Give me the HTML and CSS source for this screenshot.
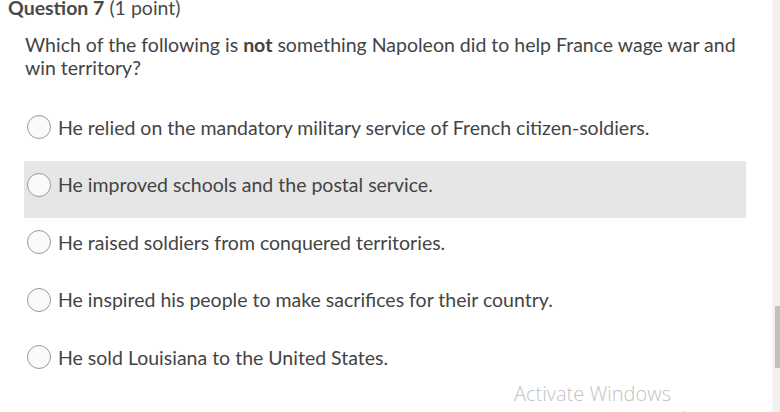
FILE: index.html
```html
<!DOCTYPE html>
<html>
<head>
<meta charset="utf-8">
<link rel="stylesheet" href="styles.css">
</head>
<body>
<div class="page">
  <main class="main">
    <div class="header"><span class="qtitle">Question 7</span> (1 point)</div>
    <div class="question">Which of the following is <strong>not</strong> something Napoleon did to help France wage war and win territory?</div>
    <ul class="options">
      <li class="option"><span class="radio"></span><span>He relied on the mandatory military service of French citizen-soldiers.</span></li>
      <li class="option hover"><span class="radio"></span><span>He improved schools and the postal service.</span></li>
      <li class="option"><span class="radio"></span><span>He raised soldiers from conquered territories.</span></li>
      <li class="option"><span class="radio"></span><span>He inspired his people to make sacrifices for their country.</span></li>
      <li class="option"><span class="radio"></span><span>He sold Louisiana to the United States.</span></li>
    </ul>
  </main>
  <div class="scrollbar"><div class="thumb"></div></div>
  <div class="activate">
    <div class="act1">Activate Windows</div>
    <div class="act2">Go to Settings to activate Windows.</div>
  </div>
</div>
</body>
</html>
```
FILE: styles.css
```css
html, body { margin: 0; padding: 0; background: #fff; }
.page {
  position: relative;
  width: 780px;
  height: 412px;
  overflow: hidden;
  display: flex;
  font-family: Lato, "Open Sans", sans-serif;
  color: #444;
}
.main { flex: 1; }
.header {
  margin-top: -4px;
  padding-left: 8px;
  font-size: 19.5px;
  line-height: 24px;
  color: #4a4a4a;
}
.qtitle { font-weight: bold; }
.question {
  padding: 13px 0 0 25px;
  width: 725px;
  font-size: 19.5px;
  line-height: 23px;
}
.question strong { font-weight: bold; }
.options {
  list-style: none;
  margin: 24px 0 0 24px;
  padding: 0;
  width: 722px;
}
.option {
  height: 57.5px;
  box-sizing: border-box;
  display: flex;
  align-items: center;
  gap: 7px;
  padding: 0 0 9px 3px;
  font-size: 19.5px;
}
.option.hover { background: #e6e6e6; }
.radio {
  width: 22px;
  height: 22px;
  border: 1px solid #999;
  border-radius: 50%;
  background: #f9fafc;
  flex: none;
}
.scrollbar {
  width: 8px;
  background: #f1f1f1;
  border-left: 1px solid #f7f7f7;
  box-sizing: border-box;
}
.thumb {
  margin: 306px 0 0 2px;
  height: 62px;
  background: #c1c1c1;
}
.activate {
  position: absolute;
  left: 514px;
  top: 381px;
  font-family: "Open Sans", sans-serif;
  color: #c2c2c2;
}
.act1 { font-size: 20px; line-height: 26px; font-weight: 300; }
.act2 { font-size: 12px; line-height: 16px; margin-top: 2px; }
```
